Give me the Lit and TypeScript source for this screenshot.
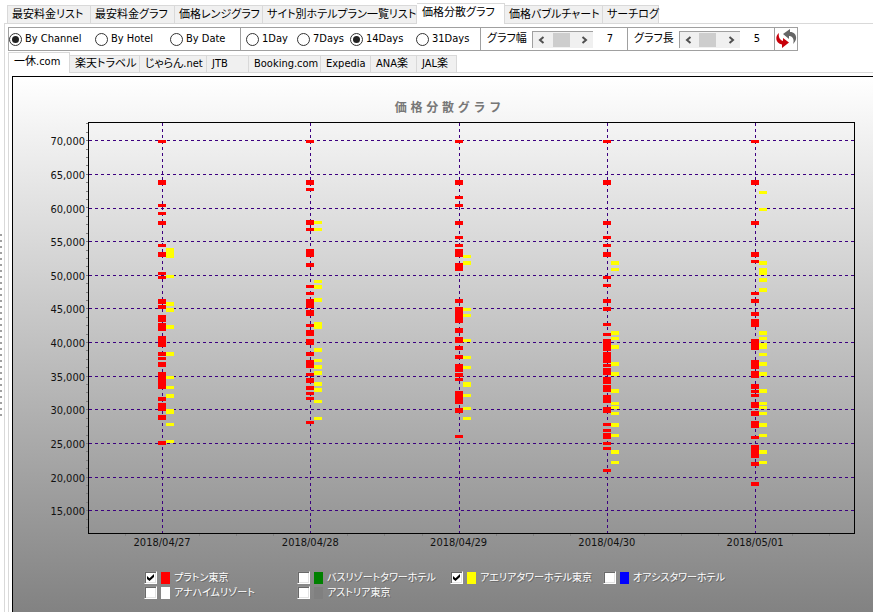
import { LitElement, html, svg, css } from "lit";
import { customElement, property, state } from "lit/decorators.js";
import { classMap } from "lit/directives/class-map.js";

type Mark = [number, number];
interface Day {
  date: string;
  red: Mark[];
  yellow: Mark[];
}

/* Each mark is [top, height] on the plot's vertical scale. */
const DAYS: Day[] = [
  {
    date: "2018/04/27",
    red: [[18, 3], [58, 5], [82, 3], [90, 3], [99, 4], [122, 3], [130, 5], [150, 3], [154, 3], [177, 5], [183, 4], [193, 7], [201, 8], [214, 11], [230, 4], [235, 3], [240, 5], [250, 17], [275, 4], [281, 8], [293, 5], [319, 4]],
    yellow: [[126, 10], [153, 3], [180, 4], [186, 4], [203, 4], [230, 4], [254, 3], [264, 3], [272, 4], [287, 5], [301, 3], [318, 3]],
  },
  {
    date: "2018/04/28",
    red: [[18, 3], [58, 5], [66, 3], [98, 5], [106, 3], [127, 8], [141, 4], [163, 3], [170, 3], [177, 9], [188, 6], [202, 3], [208, 6], [217, 6], [230, 4], [238, 8], [251, 3], [256, 5], [264, 4], [270, 3], [275, 3], [299, 3]],
    yellow: [[99, 3], [106, 3], [158, 3], [163, 4], [176, 4], [200, 7], [226, 4], [237, 3], [243, 4], [249, 4], [260, 4], [266, 4], [278, 3], [295, 3]],
  },
  {
    date: "2018/04/29",
    red: [[18, 3], [58, 5], [74, 3], [82, 3], [99, 4], [114, 3], [122, 3], [127, 8], [141, 8], [177, 4], [185, 16], [206, 5], [215, 6], [224, 4], [233, 4], [242, 8], [251, 4], [256, 3], [269, 13], [286, 5], [313, 3]],
    yellow: [[133, 3], [139, 4], [186, 3], [192, 3], [217, 3], [234, 3], [244, 3], [260, 5], [272, 3], [285, 3], [295, 3]],
  },
  {
    date: "2018/04/30",
    red: [[18, 3], [58, 5], [99, 4], [114, 3], [122, 3], [130, 5], [154, 3], [162, 3], [177, 4], [185, 4], [201, 3], [211, 3], [217, 12], [230, 11], [242, 3], [246, 7], [255, 7], [263, 7], [273, 8], [285, 6], [301, 3], [307, 3], [311, 6], [320, 3], [325, 3], [347, 3]],
    yellow: [[139, 4], [146, 3], [209, 4], [215, 3], [223, 4], [240, 4], [250, 4], [267, 4], [280, 3], [284, 3], [290, 3], [301, 4], [312, 3], [328, 4], [339, 3]],
  },
  {
    date: "2018/05/01",
    red: [[18, 3], [58, 5], [99, 4], [130, 5], [138, 3], [170, 3], [177, 4], [190, 4], [197, 8], [217, 11], [238, 9], [249, 7], [262, 5], [268, 3], [272, 3], [280, 6], [289, 5], [299, 7], [314, 3], [323, 13], [340, 4], [360, 4]],
    yellow: [[69, 3], [86, 3], [139, 4], [146, 7], [156, 4], [166, 4], [209, 4], [215, 3], [221, 6], [231, 3], [240, 4], [250, 4], [267, 4], [280, 3], [284, 3], [290, 3], [301, 4], [312, 3], [328, 4], [339, 3]],
  },
];

const MAJOR = 370 / 11;
const FIRST_X = 9.66;
const STEP_X = 19.33;
const columnX = (i: number) => `${FIRST_X + STEP_X * i}%`;
const rowY = (i: number) => Math.round(18.3 + MAJOR * i);

@customElement("scatter-plot")
export class ScatterPlot extends LitElement {
  @property({ attribute: false }) showRed = true;
  @property({ attribute: false }) showYellow = true;

  static styles = css`
    :host { display: block; }
    svg { display: block; overflow: visible; }
    .plot { width: 100%; height: 440px; }
    .grid { stroke: #3c0080; stroke-width: 1; stroke-dasharray: 3 3; shape-rendering: crispEdges; }
    .tick { fill: #808080; shape-rendering: crispEdges; }
    .frame { fill: #000; shape-rendering: crispEdges; }
    .red { fill: #f00; shape-rendering: crispEdges; }
    .yellow { fill: #ff0; shape-rendering: crispEdges; }
    .label { font: 11px "DejaVu Sans Condensed", "DejaVu Sans", sans-serif; fill: #111; }
    .end { text-anchor: end; }
    .middle { text-anchor: middle; }
  `;

  render() {
    const rows = Array.from({ length: 12 }, (_, i) => i);
    const ticksY = Array.from({ length: 49 }, (_, i) => 1 + Math.round((i * MAJOR) / 4 + 0.4)).filter((y) => y < 408);
    const ticksX = Array.from({ length: 20 }, (_, i) => i).filter((i) => i % 4 !== 1);
    return html`
      <svg class="plot" role="img" aria-label="価格分散グラフ">
        ${ticksY.map((y) => svg`<rect class="tick" x="-2" y=${y} width="2" height="1"/>`)}
        ${ticksX.map((i) => svg`<rect class="tick" x=${`${FIRST_X + (STEP_X / 4) * (i - 1)}%`} y="412" width="1" height="2"/>`)}
        ${rows.map((i) => svg`
          <line class="grid" x1="1" x2="100%" y1=${rowY(i) + 0.5} y2=${rowY(i) + 0.5}/>
          <text class="label end" x="-3" y=${rowY(i) + 5}>${`${70 - 5 * i},000`}</text>`)}
        ${DAYS.map((day, i) => svg`
          <svg x=${columnX(i)} y="0" width="1" height="440">
            <line class="grid" x1="0.5" x2="0.5" y1="1" y2="411"/>
            ${this.showRed ? day.red.map(([y, h]) => svg`<rect class="red" x="-4" y=${y} width="8" height=${h}/>`) : ""}
            ${this.showYellow ? day.yellow.map(([y, h]) => svg`<rect class="yellow" x="4" y=${y} width="8" height=${h}/>`) : ""}
            <text class="label middle" x="0" y="424">${day.date}</text>
          </svg>`)}
        <rect class="frame" x="0" y="0" width="100%" height="1"/>
        <rect class="frame" x="0" y="411" width="100%" height="1"/>
        <rect class="frame" x="0" y="0" width="1" height="412"/>
        <svg x="100%" y="0" width="1" height="412"><rect class="frame" x="-1" y="0" width="1" height="412"/></svg>
      </svg>
    `;
  }
}

@customElement("app-root")
export class AppRoot extends LitElement {
  @state() private hotels = [
    { name: "プラトン東京", tone: "s-red", on: true },
    { name: "バスリゾートタワーホテル", tone: "s-green", on: false },
    { name: "アエリアタワーホテル東京", tone: "s-yellow", on: true },
    { name: "オアシスタワーホテル", tone: "s-blue", on: false },
    { name: "アナハイムリゾート", tone: "s-white", on: false },
    { name: "アストリア東京", tone: "s-gray", on: false },
  ];
  @state() private view = 4;
  @state() private channel = 0;
  @state() private graphWidth = 7;
  @state() private graphLength = 5;

  static styles = css`
    :host {
      display: flex;
      min-height: 100vh;
      background: #fff;
      color: #000;
      font: 11px/16px "DejaVu Sans Condensed", "DejaVu Sans", "Noto Sans CJK JP", sans-serif;
      font-feature-settings: "palt";
    }
    *, *::after { box-sizing: border-box; }
    button, input { font: inherit; color: inherit; margin: 0; padding: 0; }

    .splitter {
      flex: none;
      align-self: flex-start;
      width: 2px;
      height: 182px;
      margin: 234px 2px 0 0;
      background: repeating-linear-gradient(#a0a0a0 0 2px, #fff 2px 6px);
    }
    .main { flex: 1; min-width: 0; display: flex; flex-direction: column; }

    .tabs {
      display: grid;
      align-items: end;
      flex: none;
      box-shadow: inset 0 -1px #d9d9d9;
      white-space: nowrap;
    }
    .views { grid-template-columns: 84px 84px 88px 154px 88px 98px 56px; height: 21px; margin-top: 3px; padding-left: 3px; }
    .channels { grid-template-columns: 62px 70px 67px 42px 72px 50px 46px 40px; height: 21px; margin-top: 1px; }
    .tab {
      height: 19px;
      padding: 0 0 0 4px;
      border: 1px solid #d9d9d9;
      border-left-width: 0;
      background: #f0f0f0;
      font-feature-settings: inherit;
      text-align: left;
      line-height: 16px;
    }
    .tab:first-child { border-left-width: 1px; }
    .channels .tab { height: 18px; padding-left: 5px; }
    .tabs .tab.on {
      height: 21px;
      border-bottom: 0;
      background: #fff;
      padding-left: 5px;
      padding-bottom: 2px;
    }

    .page { flex: 1; display: flex; flex-direction: column; border-left: 1px solid #d9d9d9; padding: 3px 0 0 3px; }

    .toolbar { display: flex; flex: none; align-self: flex-start; height: 24px; border: 1px solid #a0a0a0; }
    .group { display: grid; align-items: center; margin: 0; padding: 0; border: 0; border-right: 1px solid #a0a0a0; white-space: nowrap; }
    .by { grid-template-columns: 86px 75px 70px; }
    .span { grid-template-columns: 51px 53px 66px 64px; padding-left: 5px; }
    .scale { grid-template-columns: 45px 61px 34px; padding-left: 6px; }
    .radio { display: flex; align-items: center; gap: 3px; }
    .radio input {
      appearance: none;
      flex: none;
      display: grid;
      place-items: center;
      width: 13px;
      height: 13px;
      border: 1px solid #333;
      border-radius: 50%;
      background: #fff;
    }
    .radio input:checked::after { content: ""; width: 7px; height: 7px; border-radius: 50%; background: #222; }

    .bar { display: grid; grid-template-columns: 17px 1fr 17px; height: 17px; background: #f0f0f0; border-top: 1px solid #a0a0a0; border-left: 1px solid #a0a0a0; }
    .step { display: grid; place-items: center; border: 0; background: none; }
    .step svg { fill: none; stroke: #505050; stroke-width: 2; }
    .bar input { appearance: none; width: 100%; height: 16px; background: none; }
    .bar input::-webkit-slider-thumb { appearance: none; width: 17px; height: 14px; background: #cdcdcd; }
    output { text-align: center; }
    .refresh { width: 22px; height: 22px; border: 0; background: #fff; display: grid; place-items: center; }
    .refresh svg { display: block; }

    .sheet { flex: 1; display: flex; border-left: 1px solid #d9d9d9; padding: 3px 0 0 3px; }
    .chart {
      flex: 1;
      min-width: 0;
      border: 1px solid #000;
      border-width: 1px 0 0 1px;
      background: linear-gradient(#fff, #828282);
    }
    h1 { margin: 23px 0 6px; padding-left: 10px; font-size: 12px; line-height: 16px; font-feature-settings: normal; text-align: center; color: #777; white-space: pre; }
    .plot { margin: 0 18px 0 75px; }
    .legend {
      display: grid;
      grid-template-columns: repeat(4, 153px);
      justify-content: center;
      grid-auto-rows: 15px;
      margin: 0;
      padding: 8px 0 10px 14px;
      list-style: none;
      font-size: 10px;
      color: #fff;
      text-shadow: 1px 1px #666;
      white-space: nowrap;
    }
    .item { display: flex; align-items: center; gap: 4px; height: 15px; }
    .item input {
      appearance: none;
      flex: none;
      display: grid;
      place-items: center;
      width: 13px;
      height: 13px;
      border: 1px solid;
      border-color: #909090 #fff #fff #909090;
      background: #fff;
      box-shadow: inset 1px 1px #696969, inset -1px -1px #e3e3e3;
    }
    .item input:checked::after {
      content: "";
      width: 7px;
      height: 7px;
      background: #000;
      clip-path: polygon(0 29%, 36% 62%, 100% 0, 100% 42%, 36% 100%, 0 72%);
    }
    .swatch { flex: none; width: 9px; height: 12px; }
    .s-red { background: #f00; }
    .s-green { background: #008000; }
    .s-yellow { background: #ff0; }
    .s-blue { background: #00f; }
    .s-white { background: #fff; }
    .s-gray { background: #808080; }
  `;

  private tabs(kind: string, label: string, names: string[], current: number, pick: (i: number) => void) {
    return html`<div class="tabs ${kind}" role="tablist" aria-label=${label}>
      ${names.map((name, i) => html`<button type="button" role="tab" aria-selected=${i === current}
        class=${classMap({ tab: true, on: i === current })} @click=${() => pick(i)}>${name}</button>`)}
    </div>`;
  }

  private radios(name: string, labels: string[], current: number) {
    return html`<fieldset class="group ${name}" aria-label=${name}>
      ${labels.map((label, i) => html`<label class="radio"><input type="radio" name=${name} ?checked=${i === current}>${label}</label>`)}
    </fieldset>`;
  }

  private scale(label: string, id: string, value: number, max: number, set: (n: number) => void) {
    return html`<div class="group scale">
      <label for=${id}>${label}</label>
      <span class="bar">
        <button class="step" type="button" aria-label="${label} -" @click=${() => set(value - 1)}>
          <svg width="7" height="8"><path d="M5.500 1 2 4l3.500 3"/></svg>
        </button>
        <input id=${id} type="range" min="0" max=${max} .value=${String(value)}
          @input=${(e: Event) => set(Number((e.target as HTMLInputElement).value))}>
        <button class="step" type="button" aria-label="${label} +" @click=${() => set(value + 1)}>
          <svg width="7" height="8"><path d="M1.500 1 5 4 1.500 7"/></svg>
        </button>
      </span>
      <output for=${id}>${value}</output>
    </div>`;
  }

  render() {
    return html`
      <div class="splitter"></div>
      <div class="main">
        ${this.tabs("views", "表示", ["最安料金リスト", "最安料金グラフ", "価格レンジグラフ", "サイト別ホテルプラン一覧リスト", "価格分散グラフ", "価格バブルチャート", "サーチログ"], this.view, (i) => (this.view = i))}
        <div class="page">
          <div class="toolbar">
            ${this.radios("by", ["By Channel", "By Hotel", "By Date"], 0)}
            ${this.radios("span", ["1Day", "7Days", "14Days", "31Days"], 2)}
            ${this.scale("グラフ幅", "graph-width", this.graphWidth, 21, (n) => (this.graphWidth = n))}
            ${this.scale("グラフ長", "graph-length", this.graphLength, 22, (n) => (this.graphLength = n))}
            <button class="refresh" type="button" aria-label="更新">
              <svg width="22" height="20" viewBox="0 0 22 20">
                <path fill="#c8000a" d="M4 4C0 7 0 14 7 15.500V19l7-5.500L8 9v3C5 11 3 8 4 4Z"/>
                <path fill="#666" d="M18 15C23 11 22 3 15 3V0L8 5l6 5V7c4 0 5.500 4 4 8Z"/>
              </svg>
            </button>
          </div>
          ${this.tabs("channels", "チャネル", ["一休.com", "楽天トラベル", "じゃらん.net", "JTB", "Booking.com", "Expedia", "ANA楽", "JAL楽"], this.channel, (i) => (this.channel = i))}
          <div class="sheet">
            <section class="chart">
              <h1>価 格 分 散 グ ラ フ</h1>
              <scatter-plot class="plot" .showRed=${this.hotels[0].on} .showYellow=${this.hotels[2].on}></scatter-plot>
              <ul class="legend">
                ${this.hotels.map((hotel, i) => html`<li>
                  <label class="item">
                    <input type="checkbox" .checked=${hotel.on}
                      @change=${() => (this.hotels = this.hotels.map((h, j) => (j === i ? { ...h, on: !h.on } : h)))}>
                    <span class="swatch ${hotel.tone}"></span>${hotel.name}
                  </label>
                </li>`)}
              </ul>
            </section>
          </div>
        </div>
      </div>
    `;
  }
}
